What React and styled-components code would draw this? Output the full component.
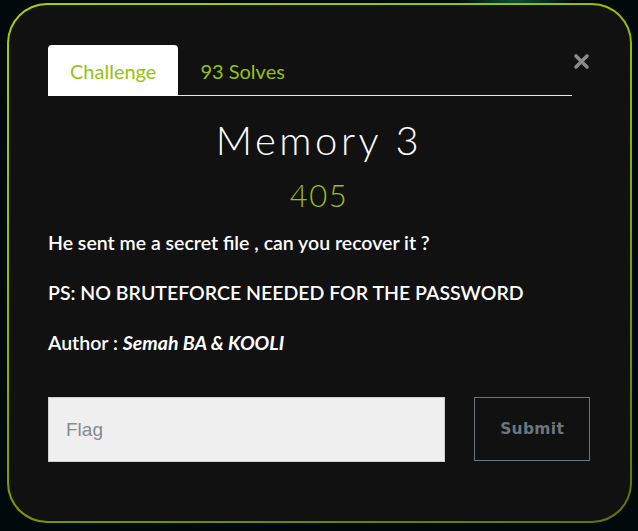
import React, {Component} from 'react';
import styled, {createGlobalStyle} from 'styled-components';

const GlobalStyle = createGlobalStyle`
	html, body {
		margin: 0;
		padding: 0;
		background: #01090c;
	}
	body {
		font-family: Lato, "Open Sans", sans-serif;
		background: radial-gradient(ellipse 60px 14px at 515px 0, rgba(20, 140, 90, 0.55), transparent), #01090c;
		min-height: 531px;
	}
`;

const Page = styled.div`
	padding: 3px 6px 8px 7px;
`;

const Modal = styled.div`
	width: 625px;
	height: 520px;
	box-sizing: border-box;
	border: 2px solid transparent;
	border-radius: 40px;
	background:
		linear-gradient(#111, #111) padding-box,
		linear-gradient(160deg, #a6d000 0%, #8fb400 45%, #5e7400 100%) border-box;
	padding: 40px 40px 0 39px;
	color: #fff;
`;

const Header = styled.div`
	display: flex;
	align-items: flex-start;
`;

const Tabs = styled.div`
	flex: 1;
	display: flex;
	border-bottom: 1px solid #e8e8e8;
`;

const Tab = styled.div`
	height: 51px;
	box-sizing: border-box;
	padding: 0 22px;
	display: flex;
	align-items: center;
	font-size: 20px;
	color: #97c20c;
	border-radius: 4px 4px 0 0;
	background: ${p => p.active ? '#fff' : 'transparent'};
	margin-bottom: -1px;
	cursor: pointer;
`;

const Close = styled.button`
	width: 18px;
	margin-top: 8px;
	padding: 0;
	background: none;
	border: none;
	cursor: pointer;
	display: flex;
	justify-content: flex-end;
`;

const Title = styled.h1`
	margin: 20px 0 0;
	text-align: center;
	font-family: Lato, sans-serif;
	font-weight: 300;
	font-size: 40px;
	letter-spacing: 3.5px;
	line-height: 48px;
`;

const Points = styled.div`
	text-align: center;
	color: #97c20c;
	font-weight: 300;
	font-size: 31px;
	line-height: 36px;
	margin-top: 13px;
	letter-spacing: 1.5px;
`;

const Description = styled.div`
	margin-top: 15px;
	p {
		margin: 0 0 21px;
		font-size: 19.5px;
		line-height: 29px;
		font-weight: 600;
	}
	p:last-child {
		margin-bottom: 0;
	}
	em {
		font-weight: 700;
	}
`;

const SubmitRow = styled.form`
	display: flex;
	gap: 29px;
	margin-top: 40px;
`;

const FlagInput = styled.input`
	width: 398px;
	height: 65px;
	box-sizing: border-box;
	background: #efefef;
	border: 1px solid #cfcfcf;
	padding: 0 17px;
	font-family: "Liberation Sans", Arial, sans-serif;
	font-size: 19px;
	color: #333;
	outline: none;
	&::placeholder {
		color: #868b92;
	}
`;

const SubmitButton = styled.button`
	width: 116px;
	height: 64px;
	background: transparent;
	border: 1px solid #6c757d;
	color: #6c757d;
	font-family: "DejaVu Sans", sans-serif;
	font-weight: 700;
	font-size: 15.5px;
	letter-spacing: 0.3px;
	cursor: pointer;
`;

class App extends Component {
	constructor(props) {
		super(props);
		this.state = {
			tab: 'challenge'
		}
	}

	render() {
		return (
			<Page>
				<GlobalStyle />
				<Modal>
					<Header>
						<Tabs>
							<Tab active={this.state.tab == 'challenge'} onClick={() => this.setState({tab: 'challenge'})}>Challenge</Tab>
							<Tab active={this.state.tab == 'solves'} onClick={() => this.setState({tab: 'solves'})}>93 Solves</Tab>
						</Tabs>
						<Close aria-label="Close">
							<svg width="17" height="17" viewBox="0 0 17 17">
								<path d="M3 3 L14 14 M14 3 L3 14" stroke="#8a8a8a" strokeWidth="3.6" strokeLinecap="round" />
							</svg>
						</Close>
					</Header>
					<Title>Memory 3</Title>
					<Points>405</Points>
					<Description>
						<p>He sent me a secret file , can you recover it ?</p>
						<p>PS: NO BRUTEFORCE NEEDED FOR THE PASSWORD</p>
						<p>Author : <em>Semah BA &amp; KOOLI</em></p>
					</Description>
					<SubmitRow onSubmit={e => e.preventDefault()}>
						<FlagInput placeholder="Flag" />
						<SubmitButton type="submit">Submit</SubmitButton>
					</SubmitRow>
				</Modal>
			</Page>
		)
	}
}

export default App;
